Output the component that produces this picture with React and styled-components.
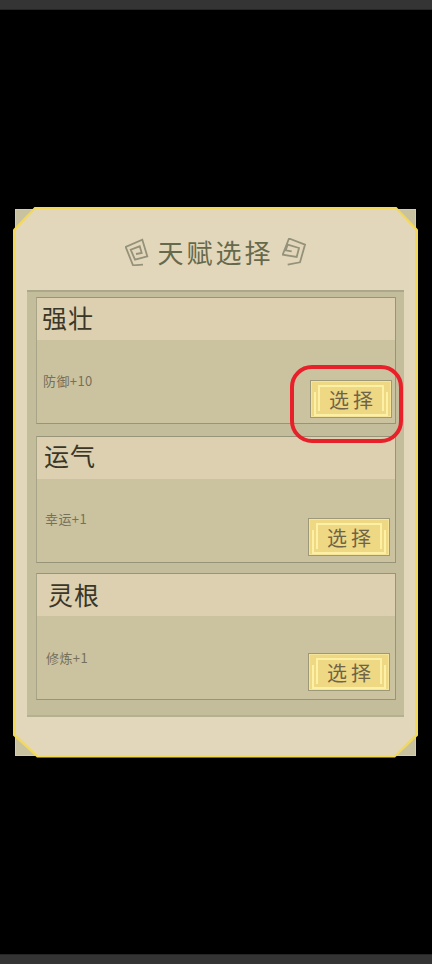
import React from 'react';
import styled, {createGlobalStyle} from 'styled-components';

const talents = [
    {name: '强壮', desc: '防御+10', top: 0, nameLeft: 5, lift: 2, descLeft: 6, descTop: 33, right: 3, bottom: 5, hot: true},
    {name: '运气', desc: '幸运+1', top: 12, nameLeft: 7, lift: 3, descLeft: 8, descTop: 32, right: 5, bottom: 6},
    {name: '灵根', desc: '修炼+1', top: 10, nameLeft: 11, lift: 1, descLeft: 9, descTop: 34, right: 5, bottom: 8},
]

const GlobalStyle = createGlobalStyle`
html, body {
    margin: 0;
    padding: 0;
    background: #000;
}
body {
    font-family: "Noto Sans CJK SC", "Noto Sans", sans-serif;
}
`

const App = () => {
    return (
        <Page>
            <GlobalStyle />
            <SystemBar $side="top" />
            <Stage>
                <Frame>
                    <Corner $v="top" $h="left" />
                    <Corner $v="top" $h="right" />
                    <Corner $v="bottom" $h="left" />
                    <Corner $v="bottom" $h="right" />
                    <Edge>
                        <Sheet>
                            <Heading>
                                <Swirl width="24" height="28" viewBox="6 5 24 28">
                                    <path d="M24 31.7 L14 32.3 L6.7 14 L23.3 6.7 L28.3 23.3 L16 26.7 L11.7 16.7 L20.7 13.3 L22.7 20 L17 21" />
                                </Swirl>
                                <HeadingText>天赋选择</HeadingText>
                                <Swirl width="24" height="28" viewBox="7 5 24 28">
                                    <path d="M12.7 31.7 L25 29.3 L30 11.7 L14 5.5 L7.7 21.7 L21.7 24 L24 15 L12.7 11.7 L10.7 17.3 L16.7 18.3" />
                                </Swirl>
                            </Heading>
                            <Tray>
                                {talents.map((talent) => (
                                    <Card key={talent.name} $top={talent.top}>
                                        <CardHead $left={talent.nameLeft} $lift={talent.lift}>{talent.name}</CardHead>
                                        <CardBody>
                                            <Desc $left={talent.descLeft} $top={talent.descTop}>{talent.desc}</Desc>
                                            <PickButton $right={talent.right} $bottom={talent.bottom}>
                                                <PickInner>选择</PickInner>
                                                {talent.hot && <Ring />}
                                            </PickButton>
                                        </CardBody>
                                    </Card>
                                ))}
                            </Tray>
                        </Sheet>
                    </Edge>
                </Frame>
            </Stage>
            <SystemBar $side="bottom" />
        </Page>
    );
}

const Page = styled.div`
display: flex;
flex-direction: column;
height: 964px;
width: 432px;
overflow: hidden;
`
const SystemBar = styled.div`
height: 10px;
background: #343434;
border-${(p) => (p.$side === 'top' ? 'bottom' : 'top')}: 1px solid #262626;
box-sizing: border-box;
`
const Stage = styled.div`
flex: 1;
display: flex;
align-items: center;
padding-left: 13px;
`
const Frame = styled.div`
position: relative;
width: 405px;
height: 551px;
`
const Corner = styled.div`
position: absolute;
width: 24px;
height: 24px;
${(p) => p.$v}: 2px;
${(p) => p.$h}: 2px;
background: #c8c2a0;
box-shadow: inset 0 0 0 1px #d8d09a;
`
const Edge = styled.div`
position: relative;
height: 100%;
box-sizing: border-box;
padding: 2px 3px;
background: #f3d95a;
clip-path: polygon(22px 0, 383px 0, 100% 23px, 100% 529px, 382px 100%, 24px 100%, 0 529px, 0 23px);
`
const Sheet = styled.div`
height: 100%;
box-sizing: border-box;
padding: 0 11px;
background: #e3d7bb;
clip-path: polygon(20px 0, calc(100% - 20px) 0, 100% 21px, 100% calc(100% - 21px), calc(100% - 21px) 100%, 22px 100%, 0 calc(100% - 21px), 0 21px);
`
const Heading = styled.div`
display: flex;
align-items: center;
justify-content: center;
gap: 8px;
height: 81px;
padding-top: 5px;
box-sizing: border-box;
`
const Swirl = styled.svg`
fill: none;
stroke: #94927a;
stroke-width: 1.8;
flex: none;
`
const HeadingText = styled.div`
font-size: 26px;
letter-spacing: 3px;
line-height: 1;
color: #666a4c;
`
const Tray = styled.div`
height: 427px;
box-sizing: border-box;
padding: 5px 8px 0 9px;
background: #c3bd9b;
border-top: 2px solid #aca788;
border-bottom: 2px solid #b5b08f;
`
const Card = styled.div`
margin-top: ${(p) => p.$top}px;
height: 127px;
box-sizing: border-box;
display: flex;
flex-direction: column;
background: #cbc3a0;
border: 1px solid #98947a;
border-left-color: #a8a488;
`
const CardHead = styled.div`
height: 42px;
flex: none;
box-sizing: border-box;
padding-left: ${(p) => p.$left}px;
background: #dcd0b1;
font-size: 25px;
line-height: ${(p) => 42 - p.$lift * 2}px;
color: #3a3628;
letter-spacing: 1px;
`
const CardBody = styled.div`
flex: 1;
display: flex;
justify-content: space-between;
`
const Desc = styled.div`
margin: ${(p) => p.$top}px 0 0 ${(p) => p.$left}px;
font-size: 13px;
line-height: 16px;
letter-spacing: 0.4px;
color: #76705a;
`
const PickButton = styled.button`
position: relative;
align-self: flex-end;
margin: 0 ${(p) => p.$right}px ${(p) => p.$bottom}px 0;
width: 82px;
height: 38px;
padding: 0;
box-sizing: border-box;
background: #eed884;
border: 1px solid #9c9878;
box-shadow: inset 0 0 0 1px #f6e498;
font-family: inherit;
`
const PickInner = styled.div`
position: relative;
height: 100%;
box-sizing: border-box;
display: flex;
align-items: center;
justify-content: center;
padding: 2px 0 0 4px;
font-size: 20px;
letter-spacing: 4px;
color: #6f6448;
&::before {
    content: '';
    position: absolute;
    left: 7px;
    right: 7px;
    top: 4px;
    height: 24px;
    border: solid #fbf0a4;
    border-width: 2px 2px 0 2px;
}
&::after {
    content: '';
    position: absolute;
    left: 3px;
    right: 3px;
    bottom: 1px;
    height: 22px;
    border: solid #fbf0a4;
    border-width: 0 2px 2px 2px;
}
`
const Ring = styled.span`
position: absolute;
left: -21px;
top: -16px;
width: 113px;
height: 78px;
box-sizing: border-box;
border: 4px solid #e8202a;
border-radius: 22px;
pointer-events: none;
`
export default App;
